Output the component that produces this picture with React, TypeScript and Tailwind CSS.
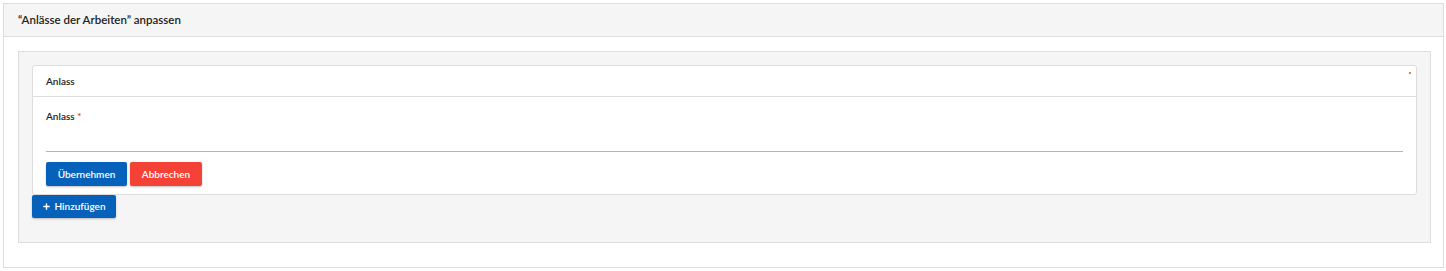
import { Plus } from "lucide-react";

export default function App() {
  return (
    <div className="bg-white font-['Lato','Open_Sans',sans-serif] text-[#222]">
      <div className="m-[3px] mr-[2px] border border-[#dddddd]">
        <div className="flex h-[33px] items-center border-b border-[#dddddd] bg-[#f5f5f5] px-[14px] text-[11.5px] font-semibold">
          “Anlässe der Arbeiten” anpassen
        </div>
        <div className="px-[14px] pb-[24px] pt-[14px] pr-[12px]">
          <div className="border border-[#dddddd] bg-[#f5f5f5] px-[13px] pb-[24px] pt-[13px]">
            <div className="relative rounded-[3px] border border-[#dddddd] bg-white">
              <span className="absolute right-[5px] top-[6px] h-[2px] w-[2px] bg-[#f0803c]" />
              <div className="flex h-[31px] items-center border-b border-[#dddddd] px-[13px] text-[10px] font-semibold">
                Anlass
              </div>
              <div className="px-[13px] pb-[8px] pt-[12px]">
                <label className="block text-[10px] font-semibold leading-[14px]">
                  Anlass <span className="text-[#e53935]">*</span>
                </label>
                <div className="mt-[28px] border-b border-[#b5b5b5]" />
                <div className="mt-[10px] flex gap-[3px]">
                  <button className="h-[24px] w-[81px] rounded-[2px] bg-[#0561b9] text-[10px] font-semibold text-white shadow-[0_1px_2px_rgba(0,0,0,0.25)]">
                    Übernehmen
                  </button>
                  <button className="h-[24px] w-[72px] rounded-[2px] bg-[#f44336] text-[10px] font-semibold text-white shadow-[0_1px_2px_rgba(0,0,0,0.25)]">
                    Abbrechen
                  </button>
                </div>
              </div>
            </div>
            <button className="flex h-[23px] w-[84px] items-center justify-center gap-[3px] rounded-[2px] bg-[#0561b9] text-[10px] font-semibold text-white shadow-[0_1px_2px_rgba(0,0,0,0.25)]">
              <Plus size={9} strokeWidth={4} />
              Hinzufügen
            </button>
          </div>
        </div>
      </div>
    </div>
  );
}
